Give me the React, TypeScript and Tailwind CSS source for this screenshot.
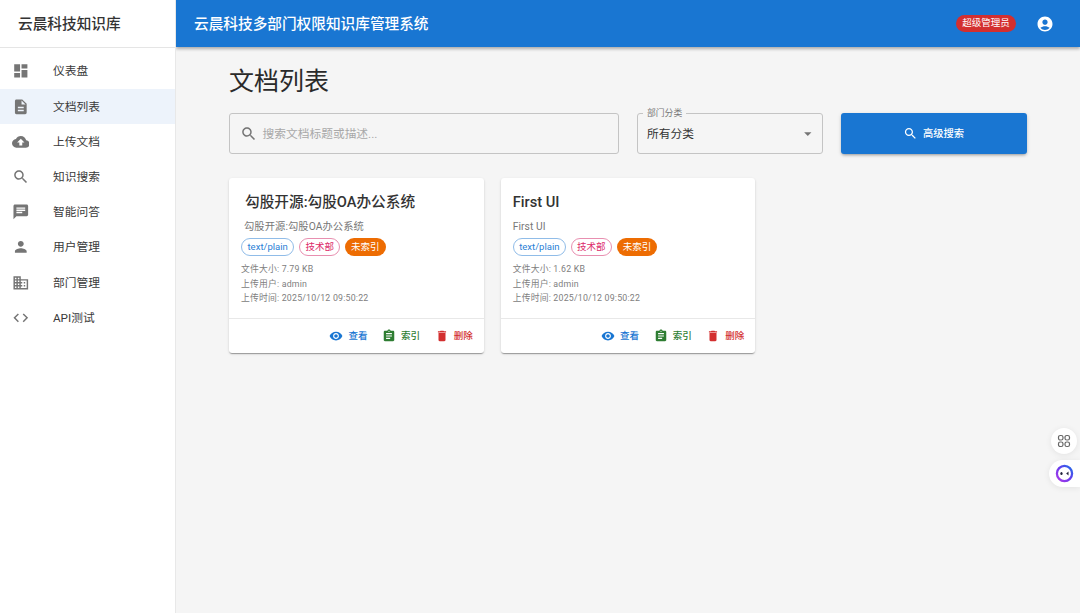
import React from "react";

const paths = {
  dashboard: "M3 13h8V3H3v10zm0 8h8v-6H3v6zm10 0h8V11h-8v10zm0-18v6h8V3h-8z",
  description:
    "M14 2H6c-1.1 0-1.99.9-1.99 2L4 20c0 1.1.89 2 1.99 2H18c1.1 0 2-.9 2-2V8l-6-6zm2 16H8v-2h8v2zm0-4H8v-2h8v2zm-3-5V3.5L18.5 9H13z",
  upload:
    "M19.35 10.04C18.67 6.59 15.64 4 12 4 9.11 4 6.6 5.64 5.35 8.04 2.34 8.36 0 10.91 0 14c0 3.31 2.69 6 6 6h13c2.76 0 5-2.24 5-5 0-2.64-2.05-4.78-4.65-4.96zM14 13v4h-4v-4H7l5-5 5 5h-3z",
  search:
    "M15.5 14h-.79l-.28-.27C15.41 12.59 16 11.11 16 9.5 16 5.91 13.09 3 9.5 3S3 5.91 3 9.5 5.91 16 9.5 16c1.61 0 3.09-.59 4.23-1.57l.27.28v.79l5 4.99L20.49 19l-4.99-5zm-6 0C7.01 14 5 11.99 5 9.5S7.01 5 9.5 5 14 7.01 14 9.5 11.99 14 9.5 14z",
  chat: "M20 2H4c-1.1 0-1.99.9-1.99 2L2 22l4-4h14c1.1 0 2-.9 2-2V4c0-1.1-.9-2-2-2zM6 9h12v2H6V9zm8 5H6v-2h8v2zm4-6H6V6h12v2z",
  person:
    "M12 12c2.21 0 4-1.79 4-4s-1.79-4-4-4-4 1.79-4 4 1.79 4 4 4zm0 2c-2.67 0-8 1.34-8 4v2h16v-2c0-2.66-5.33-4-8-4z",
  business:
    "M12 7V3H2v18h20V7H12zM6 19H4v-2h2v2zm0-4H4v-2h2v2zm0-4H4V9h2v2zm0-4H4V5h2v2zm4 12H8v-2h2v2zm0-4H8v-2h2v2zm0-4H8V9h2v2zm0-4H8V5h2v2zm10 12h-8v-2h2v-2h-2v-2h2v-2h-2V9h8v10zm-2-8h-2v2h2v-2zm0 4h-2v2h2v-2z",
  code: "M9.4 16.6 4.8 12l4.6-4.6L8 6l-6 6 6 6 1.4-1.4zm5.2 0 4.6-4.6-4.6-4.6L16 6l6 6-6 6-1.4-1.4z",
  account:
    "M12 2C6.48 2 2 6.48 2 12s4.48 10 10 10 10-4.48 10-10S17.52 2 12 2zm0 4c1.93 0 3.5 1.57 3.5 3.5S13.93 13 12 13s-3.5-1.57-3.5-3.5S10.07 6 12 6zm0 14c-2.03 0-4.43-.82-6.14-2.88C7.55 15.8 9.68 15 12 15s4.45.8 6.14 2.12C16.43 19.18 14.03 20 12 20z",
  eye: "M12 4.5C7 4.5 2.73 7.61 1 12c1.73 4.39 6 7.5 11 7.5s9.27-3.11 11-7.5c-1.73-4.39-6-7.5-11-7.5zM12 17c-2.76 0-5-2.24-5-5s2.24-5 5-5 5 2.24 5 5-2.24 5-5 5zm0-8c-1.66 0-3 1.34-3 3s1.34 3 3 3 3-1.34 3-3-1.34-3-3-3z",
  assignment:
    "M19 3h-4.18C14.4 1.84 13.3 1 12 1c-1.3 0-2.4.84-2.82 2H5c-1.1 0-2 .9-2 2v14c0 1.1.9 2 2 2h14c1.1 0 2-.9 2-2V5c0-1.1-.9-2-2-2zm-7 0c.55 0 1 .45 1 1s-.45 1-1 1-1-.45-1-1 .45-1 1-1zm2 14H7v-2h7v2zm3-4H7v-2h10v2zm0-4H7V7h10v2z",
  trash: "M6 19c0 1.1.9 2 2 2h8c1.1 0 2-.9 2-2V7H6v12zM19 4h-3.5l-1-1h-5l-1 1H5v2h14V4z",
  drop: "M7 10l5 5 5-5z",
};

const Icon = ({ d, className }: { d: string; className: string }) => (
  <svg viewBox="0 0 24 24" fill="currentColor" className={className}>
    <path d={d} />
  </svg>
);

const navItems = [
  { label: "仪表盘", icon: paths.dashboard },
  { label: "文档列表", icon: paths.description, active: true },
  { label: "上传文档", icon: paths.upload },
  { label: "知识搜索", icon: paths.search },
  { label: "智能问答", icon: paths.chat },
  { label: "用户管理", icon: paths.person },
  { label: "部门管理", icon: paths.business },
  { label: "API测试", icon: paths.code },
];

const docs = [
  {
    title: "勾股开源:勾股OA办公系统",
    desc: "勾股开源:勾股OA办公系统",
    size: "7.79 KB",
    indent: true,
  },
  { title: "First UI", desc: "First UI", size: "1.62 KB", indent: false },
];

const DocCard = ({ doc }: { doc: (typeof docs)[number] }) => (
  <div className="bg-white rounded-[3px] shadow-[0_2px_1px_-1px_rgba(0,0,0,0.2),0_1px_1px_0_rgba(0,0,0,0.14),0_1px_3px_0_rgba(0,0,0,0.12)] h-[174.5px] flex flex-col">
    <div className="px-[12px] pt-[13px] flex-1">
      <h3
        className={`text-[14.67px] leading-[23px] font-medium text-[#333] ${doc.indent ? "pl-[4px]" : ""}`}
      >
        {doc.title}
      </h3>
      <p
        className={`text-[10.27px] leading-[15px] tracking-[0.08px] text-[#777] mt-[5px] ${doc.indent ? "pl-[3px]" : ""}`}
      >
        {doc.desc}
      </p>
      <div className="flex gap-[4.6px] mt-[4px]">
        <span className="h-[18px] px-[5.5px] flex items-center rounded-full border border-[#90bce8] text-[#2a80d6] text-[9.53px]">
          text/plain
        </span>
        <span className="h-[18px] px-[5.5px] flex items-center rounded-full border border-[#e88fb0] text-[#dc2a68] text-[9.53px]">
          技术部
        </span>
        <span className="h-[18px] px-[6px] flex items-center rounded-full bg-[#ed6c02] text-white text-[9.53px]">
          未索引
        </span>
      </div>
      <div className="mt-[6px] text-[8.8px] leading-[14.6px] tracking-[0.2px] text-[#808080]">
        <div>文件大小: {doc.size}</div>
        <div>上传用户: admin</div>
        <div>上传时间: 2025/10/12 09:50:22</div>
      </div>
    </div>
    <div className="h-[34.5px] border-t border-[#e8e8e8] flex items-center justify-end gap-[14.6px] pr-[11px]">
      <span className="flex items-center gap-[5px] text-[#1976d2] text-[9.53px] font-medium">
        <Icon d={paths.eye} className="w-[14px] h-[14px]" />
        查看
      </span>
      <span className="flex items-center gap-[5px] text-[#2e7d32] text-[9.53px] font-medium">
        <Icon d={paths.assignment} className="w-[14px] h-[14px]" />
        索引
      </span>
      <span className="flex items-center gap-[5px] text-[#d32f2f] text-[9.53px] font-medium">
        <Icon d={paths.trash} className="w-[14px] h-[14px]" />
        删除
      </span>
    </div>
  </div>
);

export default function App() {
  return (
    <div className="relative w-[1080px] h-[613px] overflow-hidden flex bg-[#f5f5f5] font-['Roboto','Noto_Sans_CJK_SC',sans-serif]">
      {/* Sidebar */}
      <aside className="w-[176px] shrink-0 bg-white border-r border-[#e8e8e8] z-10">
        <div className="h-[48px] border-b border-[#e5e5e5] flex items-center pl-[18px] text-[14.67px] font-medium text-[#333]">
          云晨科技知识库
        </div>
        <nav className="pt-[5.6px]">
          {navItems.map((item) => (
            <div
              key={item.label}
              className={`h-[35.2px] flex items-center pl-[11.7px] ${item.active ? "bg-[#edf3fb]" : ""}`}
            >
              <Icon d={item.icon} className="w-[17.6px] h-[17.6px] text-[#757575]" />
              <span className="ml-[23.7px] pt-[2px] text-[11.73px] text-[#3a3a3a]">
                {item.label}
              </span>
            </div>
          ))}
        </nav>
      </aside>

      <div className="flex-1 flex flex-col min-w-0">
        {/* Top bar */}
        <header className="h-[47px] shrink-0 bg-[#1976d2] shadow-[0_2px_3px_rgba(0,0,0,0.3)] flex items-center pl-[18px] pr-[26px] text-white">
          <span className="text-[14.67px] pt-[1px] font-medium">云晨科技多部门权限知识库管理系统</span>
          <span className="ml-auto h-[17.6px] w-[60px] rounded-full bg-[#d32f2f] flex items-center justify-center text-[9.53px]">
            超级管理员
          </span>
          <Icon d={paths.account} className="ml-[20px] w-[18px] h-[18px]" />
        </header>

        {/* Content */}
        <main className="pl-[53px] pr-[53px] pt-[17px]">
          <h1 className="text-[25px] leading-[36px] text-[#2a2a2a]">文档列表</h1>
          <div className="flex gap-[18px] mt-[13px]">
            <div className="flex-1 h-[41px] border border-[#c4c4c4] rounded-[3px] flex items-center pl-[10px]">
              <Icon d={paths.search} className="w-[17.6px] h-[17.6px] text-[#757575]" />
              <span className="ml-[5px] pt-[2px] text-[11.73px] text-[#a8a8a8]">搜索文档标题或描述...</span>
            </div>
            <div className="relative w-[186px] h-[41px] border border-[#c4c4c4] rounded-[3px] flex items-center pl-[9px]">
              <span className="absolute -top-[6px] left-[5px] px-[4px] bg-[#f5f5f5] text-[8.8px] leading-[11px] text-[#777]">
                部门分类
              </span>
              <span className="pt-[2px] text-[11.73px] text-[#333]">所有分类</span>
              <Icon d={paths.drop} className="absolute right-[5px] top-[11px] w-[17.6px] h-[17.6px] text-[#757575]" />
            </div>
            <div className="w-[186px] h-[41px] pr-[1px] bg-[#1976d2] rounded-[3px] shadow-[0_2px_3px_-1px_rgba(0,0,0,0.3),0_1px_4px_0_rgba(0,0,0,0.12)] flex items-center justify-center gap-[5px] text-white text-[10.27px] font-medium">
              <Icon d={paths.search} className="w-[15px] h-[15px]" />
              高级搜索
            </div>
          </div>
          <div className="grid grid-cols-3 gap-[17px] mt-[24px]">
            {docs.map((doc) => (
              <DocCard key={doc.title} doc={doc} />
            ))}
          </div>
        </main>
      </div>

      {/* Floating widgets */}
      <div className="absolute right-[3px] top-[428px] w-[26px] h-[26px] rounded-full bg-white shadow-[0_1px_6px_rgba(0,0,0,0.08)] flex items-center justify-center">
        <svg viewBox="0 0 14 14" fill="none" stroke="#666" strokeWidth="1.2" className="w-[14px] h-[14px]">
          <rect x="1.5" y="1.5" width="4.5" height="4.5" rx="1.8" />
          <rect x="8" y="1.5" width="4.5" height="4.5" rx="1.8" />
          <rect x="1.5" y="8" width="4.5" height="4.5" rx="1.8" />
          <rect x="8" y="8" width="4.5" height="4.5" rx="1.8" />
        </svg>
      </div>
      <div className="absolute right-0 top-[460px] w-[31px] h-[27px] rounded-l-full bg-white shadow-[0_1px_6px_rgba(0,0,0,0.08)] flex items-center pl-[6px]">
        <svg viewBox="0 0 20 20" className="w-[19px] h-[19px]">
          <defs>
            <linearGradient id="ring" x1="0" y1="1" x2="1" y2="0">
              <stop offset="0" stopColor="#b03ae8" />
              <stop offset="0.5" stopColor="#6a3aed" />
              <stop offset="1" stopColor="#1d6fe8" />
            </linearGradient>
          </defs>
          <circle cx="10" cy="10" r="8" fill="#fff" stroke="url(#ring)" strokeWidth="2.4" />
          <ellipse cx="6.8" cy="10" rx="1.2" ry="1.6" fill="#1f1f3a" />
          <path d="M14.2 7.8 11.8 10l2.4 2.2z" fill="#1f1f3a" />
        </svg>
      </div>
    </div>
  );
}
